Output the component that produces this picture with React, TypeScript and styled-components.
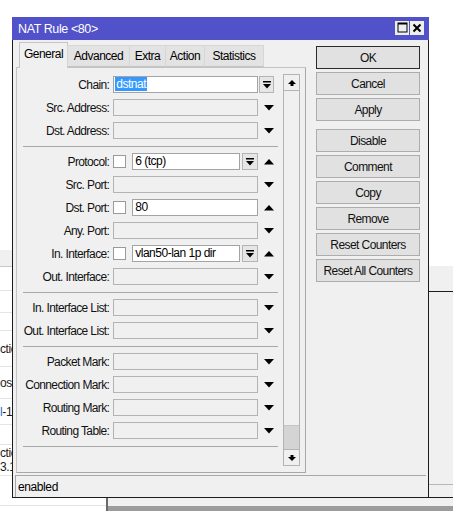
import React from "react";
import styled, { createGlobalStyle } from "styled-components";

const GlobalStyle = createGlobalStyle`
  html, body {
    margin: 0;
    padding: 0;
    background: #ffffff;
  }
  body {
    font-family: "Liberation Sans", Arial, sans-serif;
    font-size: 12px;
    color: #000;
  }
`;

type FieldKind = "select" | "empty" | "check-input" | "check-combo";

interface Field {
  label: string;
  kind: FieldKind;
  value?: string;
  arrow?: "up" | "down" | "combo" | "none";
}

const groups: Field[][] = [
  [
    { label: "Chain:", kind: "select", value: "dstnat", arrow: "combo" },
    { label: "Src. Address:", kind: "empty", arrow: "down" },
    { label: "Dst. Address:", kind: "empty", arrow: "down" },
  ],
  [
    { label: "Protocol:", kind: "check-combo", value: "6 (tcp)", arrow: "up" },
    { label: "Src. Port:", kind: "empty", arrow: "down" },
    { label: "Dst. Port:", kind: "check-input", value: "80", arrow: "up" },
    { label: "Any. Port:", kind: "empty", arrow: "down" },
    { label: "In. Interface:", kind: "check-combo", value: "vlan50-lan 1p dir", arrow: "up" },
    { label: "Out. Interface:", kind: "empty", arrow: "down" },
  ],
  [
    { label: "In. Interface List:", kind: "empty", arrow: "down" },
    { label: "Out. Interface List:", kind: "empty", arrow: "down" },
  ],
  [
    { label: "Packet Mark:", kind: "empty", arrow: "down" },
    { label: "Connection Mark:", kind: "empty", arrow: "down" },
    { label: "Routing Mark:", kind: "empty", arrow: "down" },
    { label: "Routing Table:", kind: "empty", arrow: "down" },
  ],
];

const tabs = [
  { name: "General", w: 49, active: true },
  { name: "Advanced", w: 63 },
  { name: "Extra", w: 37 },
  { name: "Action", w: 40 },
  { name: "Statistics", w: 60 },
];

const actions = [
  { name: "OK", primary: true },
  { name: "Cancel" },
  { name: "Apply" },
  { name: "Disable", spaced: true },
  { name: "Comment" },
  { name: "Copy" },
  { name: "Remove" },
  { name: "Reset Counters" },
  { name: "Reset All Counters" },
];

const backRows = [
  { h: 24, text: "" },
  { h: 22, text: "" },
  { h: 18, text: "" },
  { h: 36, text: "ction" },
  { h: 32, text: "ose" },
  { h: 26, text: "l-18", blue: true },
  { h: 20, text: "" },
  { h: 31, text: "ction", sub: "3.1" },
  { h: 30, text: "" },
];

/* ---------- desktop / background windows ---------- */

const Desktop = styled.div`
  position: relative;
  width: 453px;
  height: 511px;
  overflow: hidden;
  background: #fff;
`;

const ListWindow = styled.div`
  position: absolute;
  left: 0;
  top: 250px;
  width: 140px;
  height: 261px;
  background: #fff;
  display: flex;
  flex-direction: column;
`;

const ListHeader = styled.div`
  height: 16px;
  background: #f0f0f0;
  border-bottom: 1px solid #c8c8c8;
`;

const ListRow = styled.div<{ $h: number }>`
  height: ${(p) => p.$h}px;
  box-sizing: border-box;
  border-bottom: 1px solid #e4e4e4;
  display: flex;
  flex-direction: column;
  justify-content: center;
  line-height: 14px;
  letter-spacing: -0.4px;
  color: #1a1a1a;
`;

const Blue = styled.span`
  color: #2a6fd6;
`;

const SidePanel = styled.div`
  position: absolute;
  left: 380px;
  top: 266px;
  width: 80px;
  height: 232px;
  box-sizing: border-box;
  background: #f0f0f0;
  border-bottom: 1px solid #1c1c1c;
  display: flex;
  flex-direction: column;
`;

const SideHeader = styled.div`
  height: 25px;
  border-bottom: 1px solid #1c1c1c;
`;

const SideBody = styled.div`
  flex: 1;
  border-bottom: 1px solid #b8b8b8;
  margin-bottom: 12px;
`;

const BottomFrame = styled.div`
  position: absolute;
  left: 106px;
  top: 498px;
  width: 360px;
  height: 13px;
  box-sizing: border-box;
  background: #f0f0f0;
  border-left: 2px solid #6a6a6a;
  display: flex;
  flex-direction: column;
  justify-content: flex-end;
`;

const BottomBand = styled.div`
  height: 5px;
  background: #9c9c9c;
`;

/* ---------- main window ---------- */

const Window = styled.div`
  position: absolute;
  left: 12px;
  top: 17px;
  width: 417px;
  height: 481px;
  box-sizing: border-box;
  border: 1px solid #1c1c1c;
  border-top: none;
  background: #f0f0f0;
  display: flex;
  flex-direction: column;
`;

const TitleBar = styled.div`
  height: 23px;
  margin: 0 -1px;
  padding: 0 5px 0 6px;
  background: #5151c9;
  color: #fff;
  display: flex;
  align-items: center;
  justify-content: space-between;
  font-size: 12.5px;
  letter-spacing: -0.4px;
`;

const TitleButtons = styled.div`
  display: flex;
  gap: 1px;
  margin-top: -2px;
`;

const TitleButton = styled.div`
  width: 14px;
  height: 14px;
  background: #eeeeee;
  display: flex;
  align-items: center;
  justify-content: center;
`;

const Main = styled.div`
  flex: 1;
  display: flex;
  padding: 2px 0 0 3px;
  min-height: 0;
`;

const LeftColumn = styled.div`
  width: 290px;
  display: flex;
  flex-direction: column;
`;

const TabStrip = styled.div`
  height: 25px;
  display: flex;
  align-items: flex-end;
  padding-left: 4px;
  position: relative;
  z-index: 1;
`;

const Tab = styled.div<{ $w: number; $active?: boolean }>`
  width: ${(p) => p.$w}px;
  height: ${(p) => (p.$active ? 26 : 22)}px;
  margin-bottom: ${(p) => (p.$active ? -1 : 0)}px;
  box-sizing: border-box;
  border: 1px solid ${(p) => (p.$active ? "#c4c4c4" : "#d6d6d6")};
  border-bottom: ${(p) => (p.$active ? "none" : "1px solid #c4c4c4")};
  margin-left: -1px;
  background: ${(p) => (p.$active ? "#f0f0f0" : "#e3e3e3")};
  display: flex;
  align-items: center;
  justify-content: center;
  padding-bottom: ${(p) => (p.$active ? 3 : 0)}px;
  letter-spacing: -0.5px;
`;

const Panel = styled.div`
  flex: 1;
  box-sizing: border-box;
  border: 1px solid #c4c4c4;
  border-right-color: #a8a8a8;
  border-bottom-color: #a8a8a8;
  display: flex;
`;

const Form = styled.div`
  width: 261px;
  padding-top: 8px;
  display: flex;
  flex-direction: column;
`;

const Group = styled.div`
  display: flex;
  flex-direction: column;
  gap: 6px;
`;

const Separator = styled.div`
  height: 1px;
  background: #a8a8a8;
  margin: 7px 0 6px 6px;
`;

const Row = styled.div`
  height: 17px;
  display: flex;
  align-items: center;
`;

const Label = styled.div`
  width: 93px;
  margin-right: 4px;
  text-align: right;
  white-space: nowrap;
  letter-spacing: -0.62px;
  color: #111;
`;

const FieldArea = styled.div`
  width: 146px;
  height: 17px;
  display: flex;
  align-items: center;
`;

const Input = styled.div<{ $filled?: boolean }>`
  flex: 1;
  height: 17px;
  box-sizing: border-box;
  border: 1px solid ${(p) => (p.$filled ? "#a4a4a4" : "#b4b4b4")};
  background: ${(p) => (p.$filled ? "#ffffff" : "#f0f0f0")};
  padding-left: 2px;
  line-height: 15px;
  white-space: nowrap;
  overflow: hidden;
  letter-spacing: -0.5px;
`;

const Selected = styled.span`
  background: #3399ff;
  color: #fff;
  margin-left: -1px;
  padding: 0 1px;
`;

const CheckBox = styled.div`
  width: 13px;
  height: 13px;
  box-sizing: border-box;
  border: 1px solid #9a9a9a;
  background: #fff;
  margin-right: 6px;
  flex: none;
`;

const ComboButton = styled.div<{ $inline?: boolean }>`
  width: ${(p) => (p.$inline ? 16 : 15)}px;
  height: 17px;
  margin-left: ${(p) => (p.$inline ? 2 : 0)}px;
  box-sizing: border-box;
  border: 1px solid #b4b4b4;
  background: #e6e6e6;
  display: flex;
  align-items: center;
  justify-content: center;
  flex: none;
`;

const ArrowCell = styled.div<{ $left?: boolean }>`
  width: 19px;
  margin-left: 1px;
  height: 17px;
  display: flex;
  align-items: center;
  justify-content: ${(p) => (p.$left ? "flex-start" : "center")};
`;

const Scrollbar = styled.div`
  width: 17px;
  margin: 6px 5px 6px 5px;
  box-sizing: border-box;
  border: 1px solid #b4b4b4;
  background: #f0f0f0;
  display: flex;
  flex-direction: column;
`;

const ScrollButton = styled.div<{ $bottom?: boolean }>`
  height: 16px;
  box-sizing: border-box;
  ${(p) => (p.$bottom ? "border-top" : "border-bottom")}: 1px solid #b4b4b4;
  display: flex;
  align-items: center;
  justify-content: center;
`;

const Track = styled.div`
  flex: 1;
  display: flex;
  flex-direction: column;
  justify-content: flex-end;
`;

const Thumb = styled.div`
  height: 23px;
  background: #d4d4d4;
  border-top: 1px solid #c4c4c4;
`;

const RightColumn = styled.div`
  width: 104px;
  margin-left: 10px;
  padding-top: 4px;
  display: flex;
  flex-direction: column;
  gap: 3px;
`;

const ActionButton = styled.div<{ $primary?: boolean; $spaced?: boolean }>`
  height: 23px;
  box-sizing: border-box;
  border: 1px solid ${(p) => (p.$primary ? "#2a2a2a" : "#adadad")};
  background: #e1e1e1;
  margin-top: ${(p) => (p.$spaced ? 5 : 0)}px;
  display: flex;
  align-items: center;
  justify-content: center;
  letter-spacing: -0.58px;
  white-space: nowrap;
  color: #111;
`;

const StatusBar = styled.div`
  height: 22px;
  margin: 2px 2px 0 2px;
  box-sizing: border-box;
  border-top: 1px solid #a8a8a8;
  border-left: 1px solid #a8a8a8;
  padding-left: 2px;
  display: flex;
  align-items: center;
  letter-spacing: -0.4px;
`;

/* ---------- glyphs ---------- */

const DownArrow = () => (
  <svg width="10" height="6" viewBox="0 0 10 6">
    <polygon points="0,0 10,0 5,5.5" fill="#000" />
  </svg>
);

const UpArrow = () => (
  <svg width="10" height="6" viewBox="0 0 10 6">
    <polygon points="0,5.5 10,5.5 5,0" fill="#000" />
  </svg>
);

const ComboGlyph = () => (
  <svg width="8" height="9" viewBox="0 0 8 9">
    <rect x="0" y="1" width="8" height="1.5" fill="#000" />
    <polygon points="0,4 8,4 4,8.5" fill="#000" />
  </svg>
);

const ScrollUpGlyph = () => (
  <svg width="8" height="8" viewBox="0 0 8 8">
    <polygon points="0,5 8,5 4,1" fill="#000" />
    <rect x="2.5" y="5" width="3" height="2" fill="#000" />
  </svg>
);

const ScrollDownGlyph = () => (
  <svg width="8" height="8" viewBox="0 0 8 8">
    <rect x="2.5" y="1" width="3" height="2" fill="#000" />
    <polygon points="0,3 8,3 4,7" fill="#000" />
  </svg>
);

const MaxGlyph = () => (
  <svg width="11" height="11" viewBox="0 0 11 11">
    <rect x="1" y="1" width="9" height="9" fill="none" stroke="#000" strokeWidth="1" />
    <rect x="1" y="1" width="9" height="1.5" fill="#000" />
  </svg>
);

const CloseGlyph = () => (
  <svg width="10" height="10" viewBox="0 0 10 10">
    <path d="M1.5 1.5 L8.5 8.5 M8.5 1.5 L1.5 8.5" stroke="#000" strokeWidth="2" />
  </svg>
);

/* ---------- pieces ---------- */

const FieldRow = ({ field }: { field: Field }) => {
  const { label, kind, value, arrow } = field;
  return (
    <Row>
      <Label>{label}</Label>
      <FieldArea>
        {(kind === "check-input" || kind === "check-combo") && <CheckBox />}
        {kind === "select" && (
          <Input $filled>
            <Selected>{value}</Selected>
          </Input>
        )}
        {kind === "empty" && <Input />}
        {(kind === "check-input" || kind === "check-combo") && (
          <Input $filled>{value}</Input>
        )}
        {kind === "check-combo" && (
          <ComboButton $inline>
            <ComboGlyph />
          </ComboButton>
        )}
      </FieldArea>
      <ArrowCell $left={arrow === "combo"}>
        {arrow === "down" && <DownArrow />}
        {arrow === "up" && <UpArrow />}
        {arrow === "combo" && (
          <ComboButton>
            <ComboGlyph />
          </ComboButton>
        )}
      </ArrowCell>
    </Row>
  );
};

export default function App() {
  return (
    <>
      <GlobalStyle />
      <Desktop>
        <ListWindow>
          <ListHeader />
          {backRows.map((r, i) => (
            <ListRow key={i} $h={r.h}>
              <div>{r.blue ? <><Blue>l</Blue>-18</> : r.text}</div>
              {r.sub && <div>{r.sub}</div>}
            </ListRow>
          ))}
        </ListWindow>
        <SidePanel>
          <SideHeader />
          <SideBody />
        </SidePanel>
        <BottomFrame>
          <BottomBand />
        </BottomFrame>

        <Window>
          <TitleBar>
            <span>NAT Rule &lt;80&gt;</span>
            <TitleButtons>
              <TitleButton>
                <MaxGlyph />
              </TitleButton>
              <TitleButton>
                <CloseGlyph />
              </TitleButton>
            </TitleButtons>
          </TitleBar>

          <Main>
            <LeftColumn>
              <TabStrip>
                {tabs.map((t) => (
                  <Tab key={t.name} $w={t.w} $active={t.active}>
                    {t.name}
                  </Tab>
                ))}
              </TabStrip>
              <Panel>
                <Form>
                  {groups.map((g, gi) => (
                    <React.Fragment key={gi}>
                      <Group>
                        {g.map((f) => (
                          <FieldRow key={f.label} field={f} />
                        ))}
                      </Group>
                      <Separator />
                    </React.Fragment>
                  ))}
                </Form>
                <Scrollbar>
                  <ScrollButton>
                    <ScrollUpGlyph />
                  </ScrollButton>
                  <Track>
                    <Thumb />
                  </Track>
                  <ScrollButton $bottom>
                    <ScrollDownGlyph />
                  </ScrollButton>
                </Scrollbar>
              </Panel>
            </LeftColumn>

            <RightColumn>
              {actions.map((a) => (
                <ActionButton key={a.name} $primary={a.primary} $spaced={a.spaced}>
                  {a.name}
                </ActionButton>
              ))}
            </RightColumn>
          </Main>

          <StatusBar>enabled</StatusBar>
        </Window>
      </Desktop>
    </>
  );
}
